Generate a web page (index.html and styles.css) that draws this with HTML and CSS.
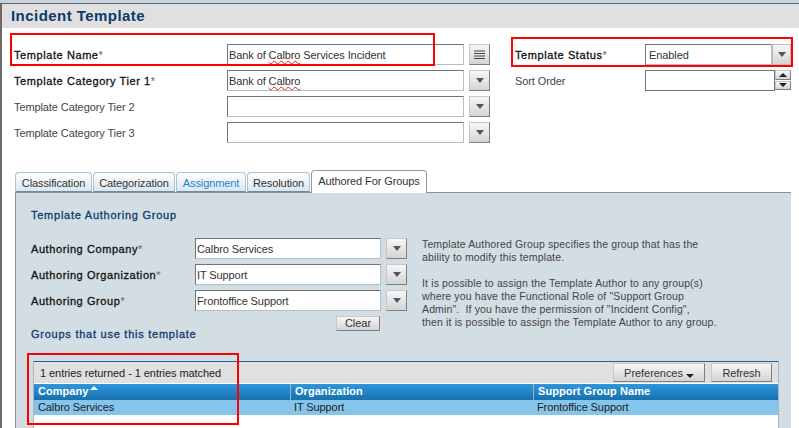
FILE: index.html
```html
<!DOCTYPE html>
<html lang="en">
<head>
<meta charset="utf-8">
<title>Incident Template</title>
<link rel="stylesheet" href="styles.css">
</head>
<body>
<main class="page">
  <header class="title-bar"><h1>Incident Template</h1></header>

  <section class="top-form">
    <div class="col-left">
      <div class="row">
        <label class="lbl lbl-wide strong">Template Name<span class="req">*</span></label>
        <div class="field f-main">Bank of <span class="spell">Calbro</span> Services Incident</div>
        <button class="icon-btn" aria-label="List"><svg width="11" height="9" viewBox="0 0 11 9"><path d="M0 1h11M0 3.500h11M0 6h11M0 8.500h11" stroke="#444" fill="none"/></svg></button>
      </div>
      <div class="row">
        <label class="lbl lbl-wide strong">Template Category Tier 1<span class="req">*</span></label>
        <div class="field f-main">Bank of <span class="spell">Calbro</span></div>
        <button class="icon-btn" aria-label="Open"><span class="caret"></span></button>
      </div>
      <div class="row">
        <label class="lbl lbl-wide">Template Category Tier 2</label>
        <div class="field f-main"></div>
        <button class="icon-btn" aria-label="Open"><span class="caret"></span></button>
      </div>
      <div class="row">
        <label class="lbl lbl-wide">Template Category Tier 3</label>
        <div class="field f-main"></div>
        <button class="icon-btn" aria-label="Open"><span class="caret"></span></button>
      </div>
    </div>
    <div class="col-right">
      <div class="row">
        <label class="lbl lbl-right strong">Template Status<span class="req">*</span></label>
        <div class="field f-status">Enabled</div>
        <button class="select-btn" aria-label="Open"><span class="caret"></span></button>
      </div>
      <div class="row">
        <label class="lbl lbl-right">Sort Order</label>
        <div class="field f-sort"></div>
        <div class="spinner">
          <button aria-label="Up"><span class="caret-up"></span></button>
          <button aria-label="Down"><span class="caret small"></span></button>
        </div>
      </div>
    </div>
  </section>

  <nav class="tabs">
    <div class="tab t1">Classification</div>
    <div class="tab t2">Categorization</div>
    <div class="tab t3 link">Assignment</div>
    <div class="tab t4">Resolution</div>
    <div class="tab active">Authored For Groups</div>
  </nav>

  <section class="panel">
    <h2 class="sec-title">Template Authoring Group</h2>
    <div class="author">
      <div class="author-fields">
        <div class="row">
          <label class="lbl lbl-auth strong">Authoring Company<span class="req">*</span></label>
          <div class="field f-auth">Calbro Services</div>
          <button class="icon-btn" aria-label="Open"><span class="caret"></span></button>
        </div>
        <div class="row">
          <label class="lbl lbl-auth strong">Authoring Organization<span class="req">*</span></label>
          <div class="field f-auth">IT Support</div>
          <button class="icon-btn" aria-label="Open"><span class="caret"></span></button>
        </div>
        <div class="row">
          <label class="lbl lbl-auth strong">Authoring Group<span class="req">*</span></label>
          <div class="field f-auth">Frontoffice Support</div>
          <button class="icon-btn" aria-label="Open"><span class="caret"></span></button>
        </div>
        <div class="clear-wrap"><button class="btn clear">Clear</button></div>
      </div>
      <div class="help">
        <p>Template Authored Group specifies the group that has the<br>ability to modify this template.</p>
        <p>It is possible to assign the Template Author to any group(s)<br>where you have the Functional Role of "Support Group<br>Admin".&nbsp; If you have the permission of "Incident Config",<br>then it is possible to assign the Template Author to any group.</p>
      </div>
    </div>
    <h2 class="sec-title groups">Groups that use this template</h2>

    <div class="table">
      <div class="toolbar">
        <span class="count">1 entries returned - 1 entries matched</span>
        <div class="tools">
          <button class="btn prefs">Preferences <span class="caret dark"></span></button>
          <button class="btn refresh">Refresh</button>
        </div>
      </div>
      <div class="grid head">
        <div class="cell">Company <span class="caret-up white"></span></div>
        <div class="cell">Organization</div>
        <div class="cell">Support Group Name</div>
      </div>
      <div class="grid data">
        <div class="cell">Calbro Services</div>
        <div class="cell">IT Support</div>
        <div class="cell">Frontoffice Support</div>
      </div>
    </div>
  </section>

  <div class="mark m1"></div>
  <div class="mark m2"></div>
  <div class="mark m3"></div>
</main>
</body>
</html>
```

FILE: styles.css
```css
* { box-sizing: border-box; }
html, body { margin: 0; padding: 0; }
body {
  width: 799px;
  height: 428px;
  overflow: hidden;
  background: #fff;
  font-family: "Liberation Sans", Arial, sans-serif;
  font-size: 11px;
  color: #333;
}
.page {
  position: relative;
  width: 799px;
  height: 428px;
  overflow: hidden;
  padding-top: 3px;
  background: linear-gradient(#c9d2da 3px, #fff 3px);
}
.page::before {
  content: "";
  position: absolute;
  left: 0;
  top: 3px;
  bottom: 0;
  width: 2px;
  background: #6a6a6a;
}
.title-bar {
  height: 25px;
  background: #dfe0df;
  border-top: 1px solid #5f6770;
  padding: 2px 0 0 11px;
}
.title-bar h1 {
  margin: 0;
  font-size: 15px;
  line-height: 19px;
  font-weight: bold;
  color: #0e3a6c;
  letter-spacing: 0.45px;
}
.top-form {
  display: flex;
  height: 139px;
  padding-top: 16px;
  padding-left: 14px;
}
.col-left { width: 501px; }
.row {
  display: flex;
  align-items: center;
  height: 21px;
  margin-bottom: 5px;
}
.lbl { letter-spacing: -0.1px; color: #444; }
.strong { color: #111; letter-spacing: 0.58px; -webkit-text-stroke: 0.3px #111; }
.req { color: #666; -webkit-text-stroke: 0; }
.lbl-wide { width: 213px; }
.lbl-right { width: 130px; }
.lbl-auth { width: 164px; }
.field {
  height: 21px;
  background: #fff;
  border: 1px solid #b4bfc5;
  border-top-color: #6f7679;
  border-left-color: #6f7679;
  padding-left: 1px;
  line-height: 21px;
  color: #333;
  letter-spacing: -0.1px;
  white-space: nowrap;
  overflow: hidden;
}
.f-main { width: 237px; }
.f-status { width: 127px; padding-left: 3px; }
.f-sort { width: 130px; border-color: #6f7679; }
.f-auth { width: 186px; }
.spell { text-decoration: underline wavy #d22; text-decoration-thickness: 1px; text-underline-offset: 1px; }
button { font: inherit; padding: 0; cursor: default; }
.icon-btn, .select-btn, .spinner button, .btn {
  background: linear-gradient(#f7f7f7, #d4d4d4);
  border: 1px solid #c6c9cb;
  border-right-color: #7b8084;
  border-bottom-color: #7b8084;
  color: #333;
}
.icon-btn {
  display: flex;
  align-items: center;
  justify-content: center;
  width: 21px;
  height: 21px;
  margin-left: 5px;
}
.select-btn {
  display: flex;
  align-items: center;
  justify-content: center;
  width: 19px;
  height: 21px;
  border-color: #b4bfc5;
}
.spinner {
  display: flex;
  flex-direction: column;
  width: 16px;
  height: 21px;
}
.spinner button {
  display: flex;
  align-items: center;
  justify-content: center;
  width: 16px;
  height: 10px;
  margin-bottom: 1px;
}
.caret {
  display: inline-block;
  width: 0;
  height: 0;
  border-left: 4.500px solid transparent;
  border-right: 4.500px solid transparent;
  border-top: 5px solid #555;
}
.caret.small { border-left-width: 4px; border-right-width: 4px; border-top-width: 4px; border-top-color: #222; }
.caret.dark { border-top-color: #222; border-left-width: 4px; border-right-width: 4px; border-top-width: 4px; vertical-align: -1px; }
.caret-up {
  display: inline-block;
  width: 0;
  height: 0;
  border-left: 4px solid transparent;
  border-right: 4px solid transparent;
  border-bottom: 4px solid #222;
}
.caret-up.white { border-bottom-color: #fff; vertical-align: 5px; margin-left: -2px; }
.tabs {
  display: flex;
  align-items: flex-end;
  height: 25px;
  padding-left: 15px;
}
.tab {
  height: 20px;
  padding-top: 4px;
  text-align: center;
  letter-spacing: -0.1px;
  white-space: nowrap;
  color: #333;
  background: linear-gradient(#ffffff, #dbe6f0);
  border: 1px solid #a9c3d6;
  border-bottom: 1px solid #6f8ca3;
  border-radius: 4px 4px 0 0;
  margin-right: 1px;
}
.t1 { width: 77px; }
.t2 { width: 82px; }
.t3 { width: 70px; }
.t4 { width: 63px; }
.link { color: #1b86c8; }
.active {
  position: relative;
  z-index: 1;
  width: 116px;
  height: 23px;
  margin-bottom: -1px;
  padding-top: 4px;
  background: #fff;
  border-color: #8c9aa5;
  border-bottom: none;
  margin-right: 0;
}
.panel {
  width: 776px;
  height: 240px;
  margin-left: 15px;
  padding: 15px 12px 0 15px;
  background: #d3dde4;
  border-left: 1px solid #87929b;
  border-top: 1px solid #87929b;
}
.sec-title {
  margin: 0;
  font-size: 11px;
  line-height: 14px;
  font-weight: normal;
  color: #0e3a6c;
  letter-spacing: 0.75px;
  -webkit-text-stroke: 0.3px #0e3a6c;
}
.author {
  display: flex;
  height: 85px;
  margin-top: 16px;
}
.author-fields { width: 391px; }
.clear-wrap {
  display: flex;
  justify-content: flex-end;
  padding-right: 42px;
  margin-top: 3px;
}
.btn { letter-spacing: -0.05px; }
.clear { width: 44px; height: 15px; line-height: 13px; }
.help {
  font-size: 10.500px;
  line-height: 13px;
  letter-spacing: 0.14px;
  color: #444;
}
.help p { margin: 0 0 13px; }
.groups { margin-top: 4px; }
.table {
  width: 746px;
  height: 70px;
  margin-top: 20px;
  margin-left: 2px;
  background: #fff;
  border-top: 1px solid #1f5f96;
  border-left: 1px solid #a9b4bc;
  border-right: 1px solid #a9b4bc;
}
.toolbar {
  display: flex;
  align-items: center;
  justify-content: space-between;
  height: 21px;
  background: #dfe0df;
  padding-left: 6px;
  color: #222;
  letter-spacing: -0.06px;
}
.tools { display: flex; gap: 6px; padding-right: 6px; }
.prefs { width: 92px; height: 19px; }
.refresh { width: 61px; height: 19px; }
.grid {
  display: grid;
  grid-template-columns: 256px 243px 1fr;
}
.head {
  height: 16px;
  margin-top: 1px;
  background: linear-gradient(#2f97dd, #1670ad);
  color: #fff;
  font-weight: bold;
  line-height: 15px;
  letter-spacing: 0.05px;
}
.head .cell + .cell { border-left: 1px solid #9fb4c2; }
.cell { padding-left: 4px; white-space: nowrap; }
.data {
  height: 15px;
  background: #85c4eb;
  color: #222;
  line-height: 15px;
  letter-spacing: -0.1px;
}
.mark { position: absolute; border: 2px solid #f00; pointer-events: none; }
.m1 { left: 10px; top: 33px; width: 425px; height: 33px; }
.m2 { left: 511px; top: 37px; width: 282px; height: 30px; }
.m3 { left: 27px; top: 353px; width: 212px; height: 72px; }
```
